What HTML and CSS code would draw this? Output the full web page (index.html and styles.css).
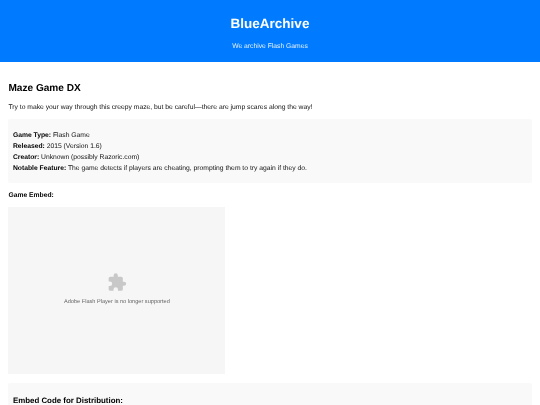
FILE: index.html
```html
<!DOCTYPE html>
<html lang="en">
<head>
<meta charset="utf-8">
<title>BlueArchive</title>
<link rel="stylesheet" href="styles.css">
</head>
<body>
<div class="page">
<header class="site-header">
  <h1 class="site-title">BlueArchive</h1>
  <p class="site-tagline">We archive Flash Games</p>
</header>
<main class="content">
  <h2 class="game-title">Maze Game DX</h2>
  <p class="game-desc">Try to make your way through this creepy maze, but be careful—there are jump scares along the way!</p>
  <section class="info-box">
    <p class="info-text"><strong>Game Type:</strong> Flash Game<br>
    <strong>Released:</strong> 2015 (Version 1.6)<br>
    <strong>Creator:</strong> Unknown (possibly Razoric.com)<br>
    <strong>Notable Feature:</strong> The game detects if players are cheating, prompting them to try again if they do.</p>
  </section>
  <p class="embed-label"><strong>Game Embed:</strong></p>
  <div class="player">
    <svg class="plugin-icon" viewBox="0 0 24 24" aria-hidden="true"><path d="M20.5 11H19V7a2 2 0 0 0-2-2h-4V3.5a2.5 2.5 0 0 0-5 0V5H4a2 2 0 0 0-2 2v3.8h1.5a2.7 2.7 0 0 1 0 5.4H2V20a2 2 0 0 0 2 2h3.8v-1.5a2.7 2.7 0 0 1 5.4 0V22H17a2 2 0 0 0 2-2v-4h1.5a2.5 2.5 0 0 0 0-5z"/></svg>
    <span class="player-msg">Adobe Flash Player is no longer supported</span>
  </div>
  <section class="code-box">
    <h3 class="code-title">Embed Code for Distribution:</h3>
  </section>
</main>
</div>
</body>
</html>
```
FILE: styles.css
```css
html, body { margin: 0; padding: 0; }
body {
  font-family: "Liberation Sans", Arial, sans-serif;
  font-size: 6.75px;
  line-height: 11px;
  color: #111;
  background: #fff;
  height: 405px;
  overflow: hidden;
  text-rendering: geometricPrecision;
}
.page { filter: blur(0.25px); }
.site-header {
  background: #007bff;
  color: #fff;
  text-align: center;
  height: 62px;
  padding-top: 15px;
  box-sizing: border-box;
}
.site-title { margin: 0; font-size: 13.5px; line-height: 18px; font-weight: 700; }
.site-tagline { margin: 8px 0 0; font-size: 6.75px; line-height: 11px; opacity: 0.9; }
.content { padding: 20px 8.4px 0; }
.game-title { margin: 0; font-size: 10.1px; line-height: 14px; font-weight: 700; color: #000; }
.game-desc { margin: 6px 0 0; color: #111; }
.info-box {
  margin-top: 6px;
  background: #f9f9f9;
  border-radius: 2px;
  padding: 10.5px 4.5px;
  height: 64px;
  box-sizing: border-box;
}
.info-text { margin: 0; color: #111; }
.info-text strong { color: #000; }
.embed-label { margin: 6.5px 0 0; color: #000; }
.player {
  margin-top: 6.5px;
  width: 217px;
  height: 167px;
  padding-bottom: 4px;
  box-sizing: border-box;
  background: #f6f6f6;
  display: flex;
  flex-direction: column;
  align-items: center;
  justify-content: center;
  color: #666;
}
.plugin-icon { width: 20px; height: 21px; fill: #c8c8c8; }
.player-msg { font-size: 5.6px; line-height: 8px; margin-top: 5px; }
.code-box {
  margin-top: 9px;
  background: #f9f9f9;
  border-radius: 2px;
  padding: 12px 4.5px;
}
.code-title { margin: 0; font-size: 7.9px; line-height: 11px; font-weight: 700; color: #000; }
```
